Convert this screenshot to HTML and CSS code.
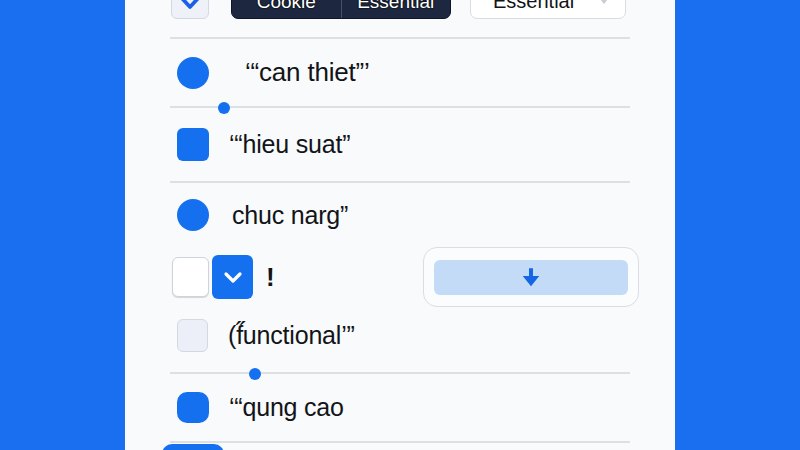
FILE: index.html
```html
<!DOCTYPE html>
<html lang="vi">
<head>
<meta charset="UTF-8">
<meta name="viewport" content="width=device-width, initial-scale=1.0">
<title>Cookie settings</title>
<link rel="stylesheet" href="styles.css">
</head>
<body>

<main class="panel">

  <!-- Top controls (scrolled partly out of view) -->
  <div class="row row-top">
    <span class="check check-soft">
      <svg viewBox="0 0 24 24" width="28" height="28"><path d="M5 7l7 7.5 7-7.5" fill="none" stroke="#1b5fe8" stroke-width="3.2" stroke-linecap="round" stroke-linejoin="round"/></svg>
    </span>
    <div class="segmented">
      <span class="seg">Cookie</span>
      <span class="seg">Essential</span>
    </div>
    <div class="select">
      <span>Essential</span>
      <svg viewBox="0 0 20 12" width="18" height="11"><path d="M2 1h16l-8 10z" fill="#c9cbd6"/></svg>
    </div>
  </div>

  <!-- Categories -->
  <div class="row row-a">
    <span class="dot-lg"></span>
    <span class="label label-wide">‘“can thiet”’</span>
    <span class="knob" style="left: 48px"></span>
  </div>

  <div class="row row-b">
    <span class="sq"></span>
    <span class="label">‘“hieu suat”</span>
  </div>

  <div class="row row-c no-line">
    <span class="dot-lg"></span>
    <span class="label label-c">chuc narg”</span>
  </div>

  <div class="row row-d no-line">
    <div class="pair">
      <span class="check check-white"></span>
      <span class="check check-blue">
        <svg viewBox="0 0 24 24" width="24" height="24"><path d="M5 9l7 7 7-7" fill="none" stroke="#fff" stroke-width="3.2" stroke-linecap="round" stroke-linejoin="round"/></svg>
      </span>
      <span class="bang">!</span>
    </div>
    <div class="card">
      <button class="down">
        <svg viewBox="0 0 20 20" width="22" height="22"><path d="M8.2 2h3.6v7h5.7L10 18.5 2.5 9h5.7z" fill="#1466e6"/></svg>
      </button>
    </div>
  </div>

  <div class="row row-e">
    <span class="check check-lilac"></span>
    <span class="label">(f̋unctional’”</span>
    <span class="knob" style="left: 79px"></span>
  </div>

  <div class="row row-f">
    <span class="sq sq-round"></span>
    <span class="label">‘“qung cao</span>
  </div>

  <div class="peek"></div>

</main>

</body>
</html>
```

FILE: styles.css
```css
/* Reset */
* {
  margin: 0;
  padding: 0;
  box-sizing: border-box;
}
html, body {
  height: 100%;
  overflow: hidden;
}
body {
  background: #1a6ff0;
  font-family: "Liberation Sans", Arial, sans-serif;
  color: #121417;
  display: flex;
  justify-content: center;
}

/* Panel */
.panel {
  width: 550px;
  height: 450px;
  background: #f8fafc;
  padding: 0 45px 0 45px;
  overflow: hidden;
}

/* Rows */
.row {
  position: relative;
  display: flex;
  align-items: center;
  border-bottom: 2px solid #dcdfe4;
}
.row.no-line {
  border-bottom: none;
}
.row-top {
  margin-top: -21px;
  height: 60px;
  align-items: flex-start;
  padding-left: 1px;
}
.row-a { height: 69px; padding-left: 7px; }
.row-b { height: 75px; padding-left: 7px; }
.row-c { height: 64px; padding-left: 7px; }
.row-d {
  height: 60px;
  justify-content: space-between;
  padding-left: 2px;
  margin-right: -9px;
}
.row-e { height: 67px; padding-left: 7px; padding-bottom: 8px; }
.row-f { height: 69px; padding-left: 7px; }

/* Top controls */
.check {
  display: flex;
  align-items: center;
  justify-content: center;
  border-radius: 6px;
}
.check-soft {
  width: 38px;
  height: 40px;
  background: #eef1f8;
  border: 1.5px solid #d3d8e2;
  align-items: flex-end;
  padding-bottom: 0;
}
.segmented {
  margin-left: 22px;
  width: 220px;
  height: 40px;
  display: flex;
  background: #1d2840;
  border: 1.5px solid #0f1627;
  border-radius: 7px;
  overflow: hidden;
}
.seg {
  flex: 1;
  display: flex;
  align-items: flex-end;
  justify-content: center;
  padding-bottom: 7px;
  color: #fff;
  font-size: 19px;
  line-height: 1;
  text-shadow: 0 0 2px #000, 0 0 1px #000;
}
.seg + .seg {
  border-left: 1px solid #46506a;
}
.select {
  margin-left: 19px;
  width: 156px;
  height: 40px;
  display: flex;
  align-items: flex-end;
  justify-content: space-between;
  padding: 0 12px 7px 22px;
  background: #fff;
  border: 1.5px solid #d9dce2;
  border-radius: 7px;
  font-size: 20px;
  line-height: 1;
}
.select svg {
  margin-bottom: 6px;
}

/* Markers */
.dot-lg {
  width: 32px;
  height: 32px;
  border-radius: 50%;
  background: #1570ef;
  flex-shrink: 0;
}
.sq {
  width: 32px;
  height: 33px;
  border-radius: 6px;
  background: #1570ef;
  flex-shrink: 0;
}
.sq-round {
  border-radius: 10px;
  height: 31px;
}
.label {
  margin-left: 20px;
  font-size: 25px;
  letter-spacing: -0.2px;
}
.label-wide { margin-left: 36px; font-size: 26px; }
.label-c { margin-left: 23px; }

/* Slider knob sitting on a divider */
.knob {
  position: absolute;
  bottom: -8px;
  width: 12px;
  height: 12px;
  border-radius: 50%;
  background: #1570ef;
}

/* Checkbox pair row */
.pair {
  display: flex;
  align-items: center;
}
.check-white {
  width: 37px;
  height: 40px;
  background: #fff;
  border: 1.5px solid #cfd3da;
  box-shadow: 0 1px 1px rgba(0, 0, 0, 0.15);
}
.check-blue {
  margin-left: 3px;
  width: 41px;
  height: 44px;
  background: #1570ef;
}
.check-lilac {
  width: 31px;
  height: 33px;
  background: #eceff7;
  border: 1.5px solid #d4d8e2;
}
.bang {
  margin-left: 13px;
  font-size: 26px;
  font-weight: bold;
}
.card {
  width: 216px;
  height: 60px;
  display: flex;
  align-items: center;
  justify-content: center;
  background: #fbfcfd;
  border: 1.5px solid #dadde3;
  border-radius: 14px;
  padding: 0 10px;
}
.down {
  width: 100%;
  height: 35px;
  display: flex;
  align-items: center;
  justify-content: center;
  border: none;
  border-radius: 6px;
  background: #c4dbf7;
}

/* Item peeking in at the bottom */
.peek {
  margin-left: -8px;
  margin-top: 1px;
  width: 62px;
  height: 30px;
  border-radius: 10px 10px 0 0;
  background: #1570ef;
}
```
